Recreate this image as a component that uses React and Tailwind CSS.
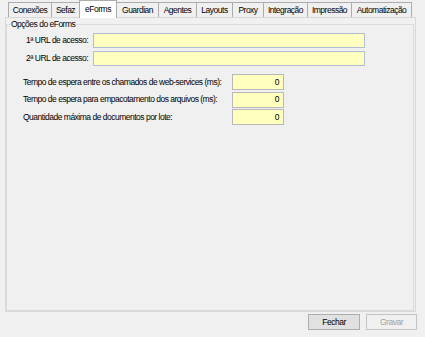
const tabs = [
  ["Conexões", "w-[44px]"],
  ["Sefaz", "w-[29px]"],
  ["eForms", "w-[38px]"],
  ["Guardian", "w-[43px]"],
  ["Agentes", "w-[39px]"],
  ["Layouts", "w-[37px]"],
  ["Proxy", "w-[32px]"],
  ["Integração", "w-[45px]"],
  ["Impressão", "w-[45px]"],
  ["Automatização", "w-[61px]"],
];

function Tab({ label, width }) {
  const active = label === "eForms";
  if (active) {
    return (
      <div
        className={`${width} h-[18px] -ml-[1px] z-10 flex items-center justify-center bg-white border border-b-0 border-[#acacac] pb-[1px] shrink-0`}
      >
        {label}
      </div>
    );
  }
  return (
    <div
      className={`${width} h-[15px] mt-[2px] flex items-center justify-center bg-[#f0f0f0] border border-b-0 border-[#acacac] -ml-[1px] first:ml-0 shrink-0`}
    >
      {label}
    </div>
  );
}

function UrlRow({ label }) {
  return (
    <div className="flex items-center h-[15px]">
      <div className="w-[81px] text-right whitespace-nowrap">{label}</div>
      <div className="ml-[5px] w-[272px] h-[15px] bg-[#ffffc0] border border-[#b0c0d2]" />
    </div>
  );
}

function NumRow({ label }) {
  return (
    <div className="flex items-center h-[16px]">
      <div className="w-[225px] pl-[16px] whitespace-nowrap">{label}</div>
      <div className="w-[52px] h-[16px] bg-[#ffffc0] border border-[#b8b8b8] flex items-center justify-end pr-[4px]">
        0
      </div>
    </div>
  );
}

export default function App() {
  return (
    <div
      className="w-[425px] h-[337px] bg-[#f0f0f0] text-black text-[8.5px] tracking-[-0.5px] overflow-hidden"
      style={{ fontFamily: '"Liberation Sans", Arial, sans-serif' }}
    >
      <div className="flex items-start h-[17px] pl-[8px] relative z-10">
        {tabs.map(([t, w]) => (
          <Tab key={t} label={t} width={w} />
        ))}
      </div>
      <div className="ml-[5px] w-[411px] h-[295px] border border-[#d9d9d9] bg-[#f0f0f0] pt-[1px]">
        <fieldset className="w-[408px] h-[292px] border border-[#dcdcdc] px-0">
          <legend className="ml-[3px] px-[1px] leading-[11px]">Opções do eForms</legend>
          <div className="flex flex-col gap-[3px] mt-[3px]">
            <UrlRow label="1ª URL de acesso:" />
            <UrlRow label="2ª URL de acesso:" />
          </div>
          <div className="flex flex-col gap-[1.5px] mt-[8px]">
            <NumRow label="Tempo de espera entre os chamados de web-services (ms):" />
            <NumRow label="Tempo de espera para empacotamento dos arquivos (ms):" />
            <NumRow label="Quantidade máxima de documentos por lote:" />
          </div>
        </fieldset>
      </div>
      <div className="flex justify-end gap-[6px] pr-[8px] mt-[2px]">
        <button className="w-[52px] h-[16px] bg-[#e1e1e1] border border-[#adadad] flex items-center justify-center">
          Fechar
        </button>
        <button className="w-[51px] h-[16px] bg-[#f0f0f0] border border-[#c4c4c4] text-[#a0a0a0] flex items-center justify-center">
          Gravar
        </button>
      </div>
    </div>
  );
}
